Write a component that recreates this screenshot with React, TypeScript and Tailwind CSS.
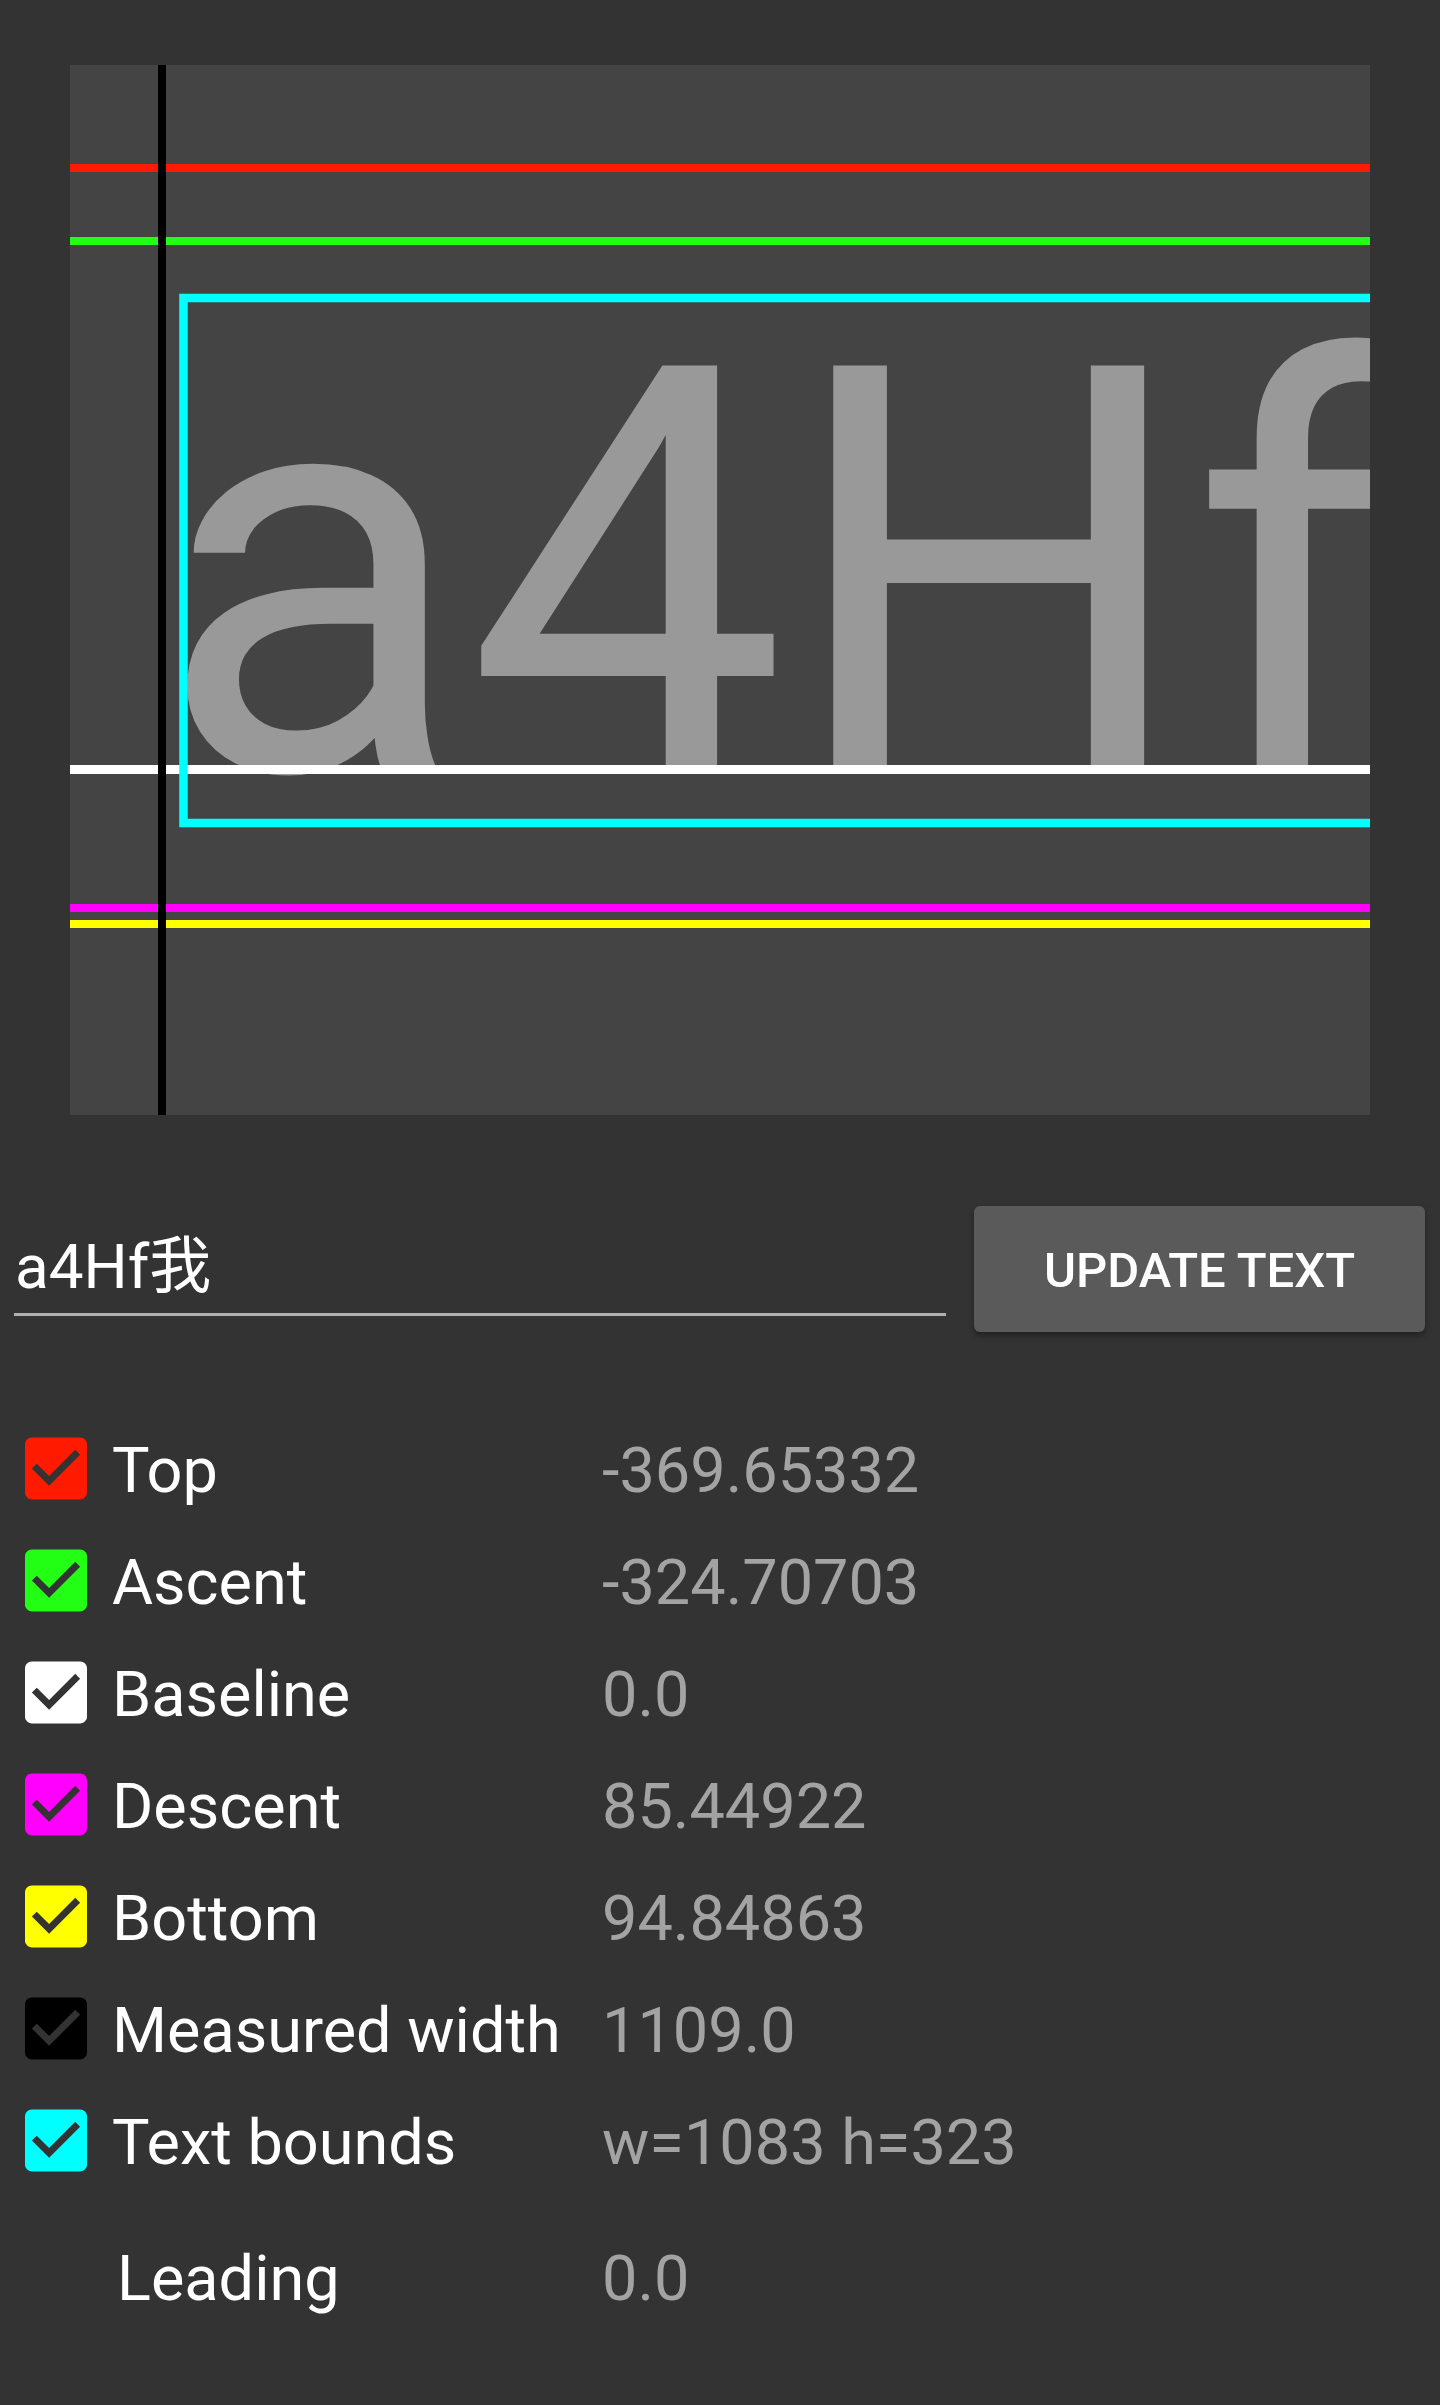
import React from "react"

type Metric = {
    label: string
    value: string
    color?: string
}

const metrics: Metric[] = [
    { label: "Top", value: "-369.65332", color: "#ff1a00" },
    { label: "Ascent", value: "-324.70703", color: "#22ff14" },
    { label: "Baseline", value: "0.0", color: "#ffffff" },
    { label: "Descent", value: "85.44922", color: "#ff00ff" },
    { label: "Bottom", value: "94.84863", color: "#ffff00" },
    { label: "Measured width", value: "1109.0", color: "#000000" },
    { label: "Text bounds", value: "w=1083 h=323", color: "#00ffff" },
]

const CheckBox = ({ color }: { color: string }) => (
    <svg viewBox="3 3 18 18" className="w-[62px] h-[63px] shrink-0">
        <path
            d="M19 3H5c-1.11 0-2 .9-2 2v14c0 1.1.89 2 2 2h14c1.11 0 2-.9 2-2V5c0-1.1-.89-2-2-2z"
            fill={color}
        />
        <path d="M10 17l-5-5 1.41-1.41L10 14.17l7.59-7.59L19 8l-9 9z" fill="#333333" />
    </svg>
)

// canvas with the font metric lines, panel origin is (70, 65)
const MetricsCanvas = () => (
    <svg width="1300" height="1050" viewBox="0 0 1300 1050" className="block">
        <text
            x="87"
            y="705"
            fill="#999999"
            fontSize="569"
            fontFamily="Roboto, 'Noto Sans CJK SC', sans-serif"
        >
            a4Hf我
        </text>
        <rect x="0" y="99" width="1300" height="8" fill="#ff1a00" />
        <rect x="0" y="172" width="1300" height="8" fill="#22ff14" />
        <rect x="0" y="700" width="1300" height="9" fill="#ffffff" />
        <rect x="0" y="839" width="1300" height="8" fill="#ff00ff" />
        <rect x="0" y="855" width="1300" height="8" fill="#ffff00" />
        <rect x="113.5" y="233" width="1400" height="525" fill="none" stroke="#00ffff" strokeWidth="8.5" />
        <rect x="88" y="0" width="8" height="1050" fill="#000000" />
    </svg>
)

const MetricRow = ({ label, value, color }: Metric) => (
    <div className="flex items-center h-[112px] pl-[25px]">
        {color ? <CheckBox color={color} /> : <div className="w-[67px] h-[63px] shrink-0" />}
        <span className={`ml-[25px] shrink-0 pt-[6px] text-[63px] leading-[74px] text-white ${color ? "w-[490px]" : "w-[485px]"}`}>
            {label}
        </span>
        <span className="pt-[6px] text-[63px] leading-[74px] text-[#a3a3a3]">{value}</span>
    </div>
)

export default function App() {
    return (
        <div className="min-h-[2405px] w-full bg-[#333333] font-['Roboto','Noto_Sans_CJK_SC',sans-serif]">

            <div className="px-[70px] pt-[65px]">
                <div className="h-[1050px] bg-[#444444] overflow-hidden">
                    <MetricsCanvas />
                </div>
            </div>

            <div className="flex items-start pl-[14px] pr-[15px] mt-[91px]">
                <div className="flex-1 mt-[26px] pb-[11px] border-b-[3px] border-[#b0b0b0]">
                    <input
                        defaultValue="a4Hf我"
                        className="w-full h-[70px] pl-[1px] bg-transparent text-white text-[62px] leading-[70px] outline-none"
                    />
                </div>
                <button className="ml-[28px] w-[451px] h-[126px] pt-[4px] rounded-[6px] bg-[#5a5a5b] text-white text-[49px] font-medium uppercase shadow-[0_4px_6px_rgba(0,0,0,0.35)]">
                    Update text
                </button>
            </div>

            <div className="mt-[80px]">
                {metrics.map(m => (
                    <MetricRow key={m.label} {...m} />
                ))}
                <div className="mt-[24px]">
                    <MetricRow label="Leading" value="0.0" />
                </div>
            </div>

        </div>
    )
}
